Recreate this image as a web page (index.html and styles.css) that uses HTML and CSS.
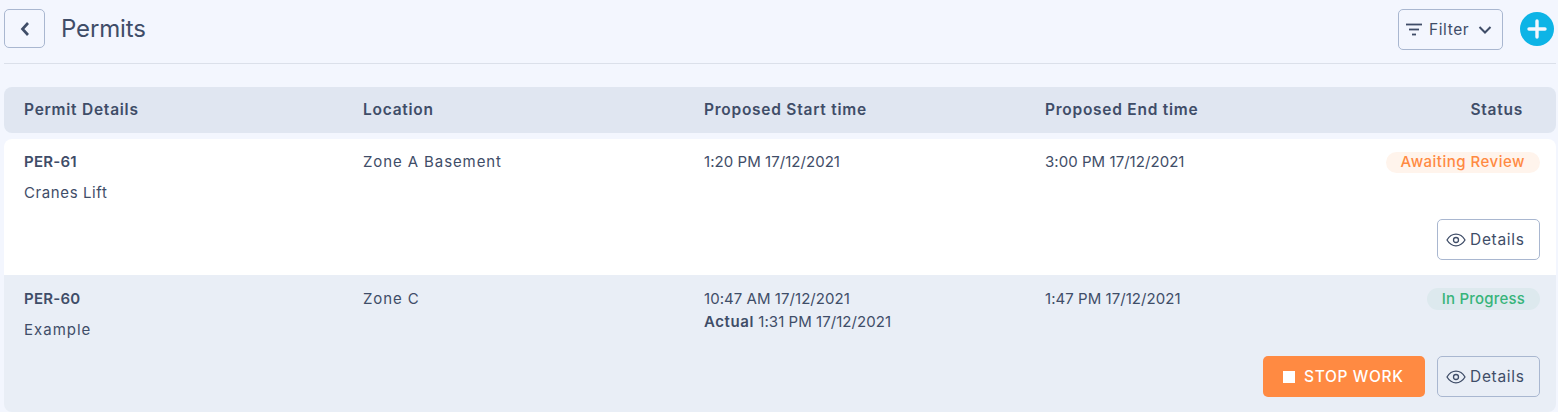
FILE: index.html
```html
<!DOCTYPE html>
<html lang="en">
<head>
<meta charset="utf-8">
<title>Permits</title>
<link rel="stylesheet" href="styles.css">
</head>
<body>
<div class="page">
  <header class="top">
    <button class="back" aria-label="Back">
      <svg width="12" height="16" viewBox="0 0 12 16"><path d="M9 2 3.500 8 9 14" fill="none" stroke="#3f4d68" stroke-width="2.700"/></svg>
    </button>
    <h1 class="title">Permits</h1>
    <button class="filter">
      <svg width="18" height="14" viewBox="0 0 18 14"><path d="M1 1.500h16" stroke="#3f4d68" stroke-width="1.800"/><path d="M4 6.500h10" stroke="#3f4d68" stroke-width="1.800"/><path d="M7 11.500h4" stroke="#3f4d68" stroke-width="1.800"/></svg>
      <span>Filter</span>
      <svg class="chev" width="14" height="10" viewBox="0 0 14 10"><path d="M1.500 2 7 7.500 12.500 2" fill="none" stroke="#3f4d68" stroke-width="2"/></svg>
    </button>
    <button class="add" aria-label="Add">
      <svg width="20" height="20" viewBox="0 0 20 20"><path d="M10 2v16M2 10h16" stroke="#f3f6fd" stroke-width="3.400" stroke-linecap="round"/></svg>
    </button>
  </header>
  <div class="rule"></div>

  <div class="cols head">
    <div>Permit Details</div>
    <div>Location</div>
    <div>Proposed Start time</div>
    <div>Proposed End time</div>
    <div class="right">Status</div>
  </div>

  <section class="row white">
    <div class="cols">
      <div>
        <div class="id">PER-61</div>
        <div class="name">Cranes Lift</div>
      </div>
      <div class="place">Zone A Basement</div>
      <div>1:20 PM 17/12/2021</div>
      <div>3:00 PM 17/12/2021</div>
      <div class="right"><span class="pill orange">Awaiting Review</span></div>
    </div>
    <div class="actions">
      <button class="details">
        <svg width="20" height="14" viewBox="0 0 20 14"><path d="M1 7c2.300-3.800 5.300-5.800 9-5.800s6.700 2 9 5.800c-2.300 3.800-5.300 5.800-9 5.800S3.300 10.800 1 7z" fill="none" stroke="#3f4d68" stroke-width="1.300"/><circle cx="10" cy="7" r="2.500" fill="none" stroke="#3f4d68" stroke-width="1.300"/></svg>
        <span>Details</span>
      </button>
    </div>
  </section>

  <section class="row tint">
    <div class="cols">
      <div>
        <div class="id">PER-60</div>
        <div class="name wide">Example</div>
      </div>
      <div class="place">Zone C</div>
      <div>
        <div>10:47 AM 17/12/2021</div>
        <div class="actual"><b>Actual</b> 1:31 PM 17/12/2021</div>
      </div>
      <div>1:47 PM 17/12/2021</div>
      <div class="right"><span class="pill green">In Progress</span></div>
    </div>
    <div class="actions">
      <button class="stop"><i class="square"></i><span>STOP WORK</span></button>
      <button class="details">
        <svg width="20" height="14" viewBox="0 0 20 14"><path d="M1 7c2.300-3.800 5.300-5.800 9-5.800s6.700 2 9 5.800c-2.300 3.800-5.300 5.800-9 5.800S3.300 10.800 1 7z" fill="none" stroke="#3f4d68" stroke-width="1.300"/><circle cx="10" cy="7" r="2.500" fill="none" stroke="#3f4d68" stroke-width="1.300"/></svg>
        <span>Details</span>
      </button>
    </div>
  </section>
</div>
</body>
</html>
```
FILE: styles.css
```css
* { box-sizing: border-box; }
html, body { margin: 0; height: 100%; overflow: hidden; }
body {
  background: #f3f6fe;
  color: #3f4d68;
  font-family: Inter, "Noto Sans", sans-serif;
  font-size: 15px;
  letter-spacing: 0.05px;
}
button { font: inherit; letter-spacing: inherit; color: inherit; background: none; cursor: pointer; padding: 0; }
.page { padding: 9px 2px 0 4px; }
.top { display: flex; align-items: flex-start; height: 54px; }
.back {
  width: 41px; height: 39px;
  border: 1px solid #a9b7d0; border-radius: 5px;
  display: flex; align-items: center; justify-content: center;
}
.title { margin: 0 0 0 16px; font-size: 24px; font-weight: 400; line-height: 39px; letter-spacing: -0.15px; }
.filter {
  margin-left: auto;
  width: 105px; height: 41px;
  border: 1px solid #a9b7d0; border-radius: 5px;
  display: flex; align-items: center; gap: 6px; padding: 0 10px 0 6px;
  font-size: 15.500px; letter-spacing: 0.6px;
}
.chev { margin-left: auto; }
.add {
  margin: 3px 2px 0 17px;
  width: 34px; height: 34px; border: 0; border-radius: 50%;
  background: #0db4e6;
  display: flex; align-items: center; justify-content: center;
}
.rule { height: 1px; background: #dbe0ea; }
.cols {
  display: grid;
  grid-template-columns: 339px 341px 341px 1fr auto;
  padding: 0 16px 0 20px;
}
.head {
  margin-top: 23px; height: 46px;
  align-items: center;
  background: #e0e6f1;
  border-radius: 8px;
  font-weight: 600; font-size: 15.500px; letter-spacing: 0.75px;
  padding-bottom: 2px;
}
.head .right { padding-right: 17px; }
.row { padding-top: 13px; }
.white { margin-top: 6px; height: 136px; background: #fff; border-radius: 8px 8px 0 0; }
.tint { height: 137px; padding-top: 14px; background: #e9eef6; border-radius: 0 0 8px 8px; }
.row .cols { line-height: 20px; height: 67px; }
.id { font-weight: 600; letter-spacing: 0.25px; }
.name { margin-top: 11px; letter-spacing: 0.6px; }
.name.wide { letter-spacing: 1px; }
.place { letter-spacing: 0.9px; }
.actual { margin-top: 3px; }
.actual b { font-weight: 600; letter-spacing: 0.6px; }
.right { text-align: right; }
.pill {
  display: block; width: fit-content; margin-left: auto;
  height: 21px; line-height: 20px; border-radius: 11px;
  padding: 0 15px; font-weight: 500; font-size: 15px;
}
.orange { background: #fff4ec; color: #ff8a42; letter-spacing: 0.5px; }
.green { background: #dde9ee; color: #37b47a; letter-spacing: 0.2px; height: 22px; margin-top: -1px; line-height: 21px; }
.actions {
  display: flex; justify-content: flex-end; gap: 12px;
  padding-right: 16px;
}
.details {
  width: 103px; height: 41px;
  border: 1px solid #a9b7d0; border-radius: 5px;
  display: flex; align-items: center; gap: 4px; padding-left: 8px;
  font-size: 15.500px; letter-spacing: 0.7px;
}
.stop {
  width: 162px; height: 41px; border: 0; border-radius: 5px;
  background: #ff8a42; color: #fff;
  display: flex; align-items: center; gap: 9px; padding-left: 20px;
  font-size: 15.500px; font-weight: 500; letter-spacing: 0.65px;
}
.square { width: 12px; height: 12px; background: #fff; }
```
